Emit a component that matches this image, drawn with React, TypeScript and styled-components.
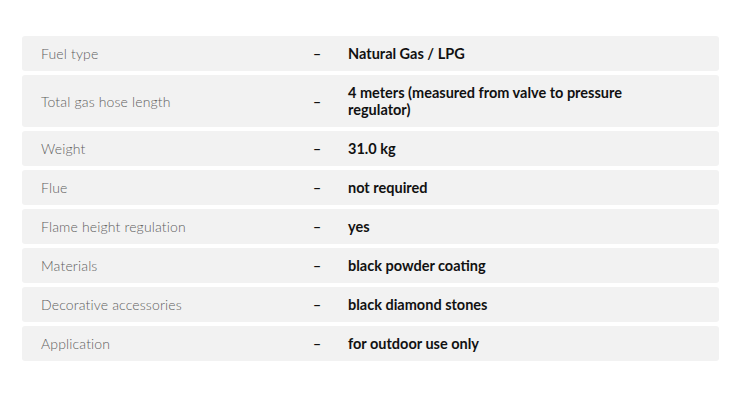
import React from "react";
import styled, { createGlobalStyle } from "styled-components";

const Global = createGlobalStyle`
  html, body { margin: 0; padding: 0; background: #fff; }
  body { font-family: Lato, "Noto Sans", sans-serif; }
`;

const Page = styled.div`
  padding: 36px 26px 0 22px;
`;

const Table = styled.div`
  display: flex;
  flex-direction: column;
  gap: 4px;
`;

const Row = styled.div`
  display: grid;
  grid-template-columns: 272px 35px 1fr;
  align-items: center;
  background: #f2f2f2;
  border-radius: 3px;
  padding: 9px 80px 9px 19px;
  line-height: 17px;
`;

const Label = styled.div`
  font-size: 14px;
  font-weight: 300;
  color: #5e5e5e;
  letter-spacing: 0.15px;
`;

const Dash = styled.div`
  font-size: 14px;
  font-weight: 700;
  color: #111;
`;

const Value = styled.div`
  font-size: 14.5px;
  font-weight: 700;
  color: #111;
`;

const specs: [string, string][] = [
  ["Fuel type", "Natural Gas / LPG"],
  ["Total gas hose length", "4 meters (measured from valve to pressure regulator)"],
  ["Weight", "31.0 kg"],
  ["Flue", "not required"],
  ["Flame height regulation", "yes"],
  ["Materials", "black powder coating"],
  ["Decorative accessories", "black diamond stones"],
  ["Application", "for outdoor use only"],
];

export default function App() {
  return (
    <>
      <Global />
      <Page>
        <Table>
          {specs.map(([k, v]) => (
            <Row key={k}>
              <Label>{k}</Label>
              <Dash>–</Dash>
              <Value>{v}</Value>
            </Row>
          ))}
        </Table>
      </Page>
    </>
  );
}
